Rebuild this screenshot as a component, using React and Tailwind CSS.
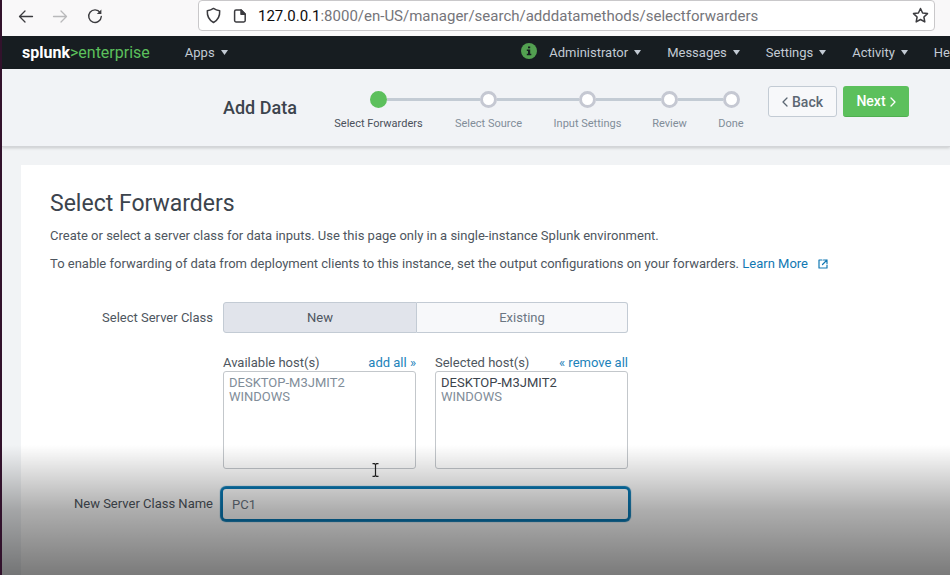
const STEPS = [
  { label: "Select Forwarders", width: "w-[121px]" },
  { label: "Select Source", width: "w-[99px]" },
  { label: "Input Settings", width: "w-[99px]" },
  { label: "Review", width: "w-[65px]" },
  { label: "Done", width: "w-[58px]" },
];

const HOSTS = ["DESKTOP-M3JMIT2", "WINDOWS"];

function Icon({ size, children, className = "", stroke = 1.5 }) {
  return (
    <svg
      width={size}
      height={size}
      viewBox={`0 0 ${size} ${size}`}
      fill="none"
      stroke="currentColor"
      strokeWidth={stroke}
      strokeLinecap="round"
      strokeLinejoin="round"
      className={`shrink-0 ${className}`}
      aria-hidden="true"
    >
      {children}
    </svg>
  );
}

function BrowserBar() {
  return (
    <div className="flex h-9 items-center bg-[#f9f8f9] pr-[15px] pl-4 text-[#3b3b3f]">
      <div className="mr-[94px] flex items-center gap-[18px]">
        <button type="button" aria-label="Back">
          <Icon size={16} stroke={1.3} className="mb-1">
            <path d="M14.500 8.500H1.500M7 3L1.500 8.500L7 14" />
          </Icon>
        </button>
        <button type="button" aria-label="Forward" className="text-[#b9b9bb]">
          <Icon size={16} stroke={1.3} className="mb-1">
            <path d="M1.500 8.500h13M9 3l5.500 5.500L9 14" />
          </Icon>
        </button>
        <button type="button" aria-label="Reload">
          <Icon size={18} stroke={1.4} className="mb-1">
            <path d="M14.200 5.600A6.300 6.300 0 1 0 15.300 9.500" />
            <path d="M15.400 2.400v4.600h-4.600z" fill="currentColor" stroke="none" />
          </Icon>
        </button>
      </div>
      <div className="mb-[5px] flex h-[31px] min-w-0 flex-1 items-center rounded-[4px] border border-[#c9c8ca] bg-white pr-[5px] pl-[6px]">
        <Icon size={17}>
          <path d="M8.500 1.400C10.500 2.800 12.600 3.400 14.700 3.700C15 9 13.300 12.900 8.500 15.500C3.700 12.900 2 9 2.300 3.700C4.400 3.400 6.500 2.800 8.500 1.400z" />
        </Icon>
        <Icon size={16} className="ml-[10px]">
          <path d="M4 2h5.200L13.200 6v6.600a1.400 1.400 0 0 1-1.400 1.400H4a1.400 1.400 0 0 1-1.400-1.400V3.400A1.400 1.400 0 0 1 4 2z" />
          <path d="M9 2l4.200 4.200H9z" fill="currentColor" />
        </Icon>
        <p className="ml-[10px] min-w-0 flex-1 truncate pt-[2px] text-[15px] text-[#75757a]">
          <span className="text-[#0c0c0d]">127.0.0.1</span>:8000/en-US/manager/search/adddatamethods/selectforwarders
        </p>
        <button type="button" aria-label="Bookmark this page">
          <Icon size={17}>
            <path d="M8.500 1.500l2.100 4.500 4.900.6-3.600 3.400.9 4.900-4.300-2.400-4.300 2.400.9-4.900L1.500 6.600l4.900-.6z" />
          </Icon>
        </button>
      </div>
    </div>
  );
}

function MenuButton({ children }) {
  return (
    <button type="button" className="flex shrink-0 items-center gap-[6px]">
      {children}
      <svg width="7" height="5" viewBox="0 0 7 5" fill="currentColor" aria-hidden="true">
        <path d="M0 0h7L3.500 5z" />
      </svg>
    </button>
  );
}

function NavBar() {
  return (
    <nav className="flex h-[33px] items-center justify-between overflow-hidden bg-[#171d21] pl-5 text-[13px] text-[#c3cbd4]">
      <div className="flex shrink-0 items-center gap-[35px]">
        <a href="#home" className="text-[16px]">
          <span className="font-bold text-white">splunk</span>
          <span className="text-[#5cc05c]">&gt;enterprise</span>
        </a>
        <MenuButton>Apps</MenuButton>
      </div>
      <div className="flex shrink-0 items-center gap-[26px]">
        <div className="flex items-center gap-3">
          <svg width="16" height="16" viewBox="0 0 16 16" className="mb-1" aria-label="Health">
            <circle cx="8" cy="8" r="8" fill="#53a051" />
            <path
              d="M7 3.500h2.200v1.800H7zM5.800 6.500h3.400v4.200h1.100v1.500H5.800v-1.500H7V8H5.800z"
              fill="#171d21"
            />
          </svg>
          <MenuButton>Administrator</MenuButton>
        </div>
        <MenuButton>Messages</MenuButton>
        <MenuButton>Settings</MenuButton>
        <MenuButton>Activity</MenuButton>
        <button type="button">He</button>
      </div>
    </nav>
  );
}

function Stepper() {
  return (
    <ol className="flex shrink-0">
      {STEPS.map((step, i) => (
        <li key={step.label} className={`flex flex-col items-center gap-2 ${step.width}`}>
          <div className="flex w-full items-center">
            <span className={`h-[3px] flex-1 ${i === 0 ? "" : "bg-[#c3cbd4]"}`} />
            <span
              className={`size-[17px] rounded-full border-3 ${
                i === 0 ? "border-[#5cc05c] bg-[#5cc05c]" : "border-[#c5c8d2] bg-white"
              }`}
            />
            <span className={`h-[3px] flex-1 ${i === STEPS.length - 1 ? "" : "bg-[#c3cbd4]"}`} />
          </div>
          <span className={`text-[11px] leading-4 whitespace-nowrap ${i === 0 ? "text-[#4a505a]" : "text-[#818d99]"}`}>
            {step.label}
          </span>
        </li>
      ))}
    </ol>
  );
}

function WizardHeader() {
  return (
    <header className="flex h-[78px] items-start overflow-hidden border-b border-[#d3d5d8] bg-[#f1f3f6] pl-[221px] shadow-[0_1px_3px_rgba(0,0,0,0.18)]">
      <h1 className="mt-[27px] w-[95px] shrink-0 text-[18px] leading-6 font-medium text-[#3c444d]">Add Data</h1>
      <div className="mt-[22px]">
        <Stepper />
      </div>
      <div className="mt-[17px] ml-2 flex shrink-0 gap-[6px] text-[14px] font-medium">
        <button
          type="button"
          className="flex h-[31px] w-[69px] items-center justify-center gap-1 rounded-[3px] border border-[#c3cbd4] bg-[#f7f8fa] pt-px text-[#5c6773]"
        >
          <Icon size={6} stroke={1.3} className="overflow-visible">
            <path d="M5-1L1 3l4 4" />
          </Icon>
          Back
        </button>
        <button
          type="button"
          className="flex h-[31px] w-[66px] items-center justify-center gap-1 rounded-[3px] border-b border-[#4fae50] bg-[#5cc05c] pt-px text-white"
        >
          Next
          <Icon size={6} stroke={1.3} className="overflow-visible">
            <path d="M1-1l4 4-4 4" />
          </Icon>
        </button>
      </div>
    </header>
  );
}

function HostList({ id, title, action, activeFirst }) {
  return (
    <div className="w-[193px]">
      <div className="flex justify-between leading-4">
        <span id={id}>{title}</span>
        <a href="#hosts" className="text-[#2182ba]">
          {action}
        </a>
      </div>
      <ul
        aria-labelledby={id}
        className="h-[98px] rounded-[3px] border border-[#c3c7cb] bg-white px-[5px] pt-1 leading-[14px] text-[#818d99]"
      >
        {HOSTS.map((host, i) => (
          <li key={host} className={activeFirst && i === 0 ? "text-[#3c444d]" : ""}>
            {host}
          </li>
        ))}
      </ul>
    </div>
  );
}

function ForwarderForm() {
  return (
    <form className="mt-7" onSubmit={(e) => e.preventDefault()}>
      <div className="flex items-center gap-[10px]">
        <span id="server-class" className="w-[163px] shrink-0 text-right">
          Select Server Class
        </span>
        <div role="group" aria-labelledby="server-class" className="flex h-[31px] w-[405px]">
          <button
            type="button"
            aria-pressed="true"
            className="w-[194px] rounded-l-[3px] border border-[#c3cbd4] bg-[#e1e4eb]"
          >
            New
          </button>
          <button
            type="button"
            aria-pressed="false"
            className="flex-1 rounded-r-[3px] border border-l-0 border-[#c3cbd4] bg-[#f7f8fa] text-[#6b7682]"
          >
            Existing
          </button>
        </div>
      </div>
      <div className="mt-[22px] ml-[173px] flex gap-[19px]">
        <HostList id="available" title="Available host(s)" action="add all »" />
        <HostList id="selected" title="Selected host(s)" action="« remove all" activeFirst />
      </div>
      <div className="mt-5 flex items-center gap-[10px]">
        <label htmlFor="class-name" className="w-[163px] shrink-0 text-right">
          New Server Class Name
        </label>
        <input
          id="class-name"
          type="text"
          defaultValue="PC1"
          className="h-[30px] w-[405px] rounded-[3px] bg-white px-[9px] text-[#6b7682] shadow-[0_0_1px_3px_#087ab6] outline-none"
        />
      </div>
    </form>
  );
}

export default function App() {
  return (
    <div className="relative flex min-h-screen flex-col overflow-hidden border-l-2 border-[#32122c] bg-[#f1f3f5] font-['Roboto',sans-serif] text-[13px] text-[#4e5660]">
      <BrowserBar />
      <NavBar />
      <WizardHeader />
      <main className="mt-[18px] ml-[19px] flex-1 bg-white px-[29px] pt-[25px]">
        <h2 className="text-[23px] leading-7 text-[#3c444d]">Select Forwarders</h2>
        <p className="mt-2 leading-5">
          Create or select a server class for data inputs. Use this page only in a single-instance Splunk environment.
        </p>
        <p className="mt-2 leading-5">
          To enable forwarding of data from deployment clients to this instance, set the output configurations on your
          forwarders.{" "}
          <a href="#learn-more" className="text-[#1178b3]">
            Learn More
            <Icon size={10} stroke={1.2} className="ml-[10px] inline-block align-[-1px]">
              <path d="M4 1H1v8h8V6M5.500 1H9v3.500M9 1L4.500 5.500" />
            </Icon>
          </a>
        </p>
        <ForwarderForm />
      </main>
      <svg width="7" height="14" viewBox="0 0 7 14" className="absolute top-[463px] left-[370px]" aria-hidden="true">
        <path d="M.5.700h2l1 .8 1-.8h2M3.500 1.500v11M.5 13.300h2l1-.8 1 .8h2" fill="none" stroke="#222" strokeWidth="1.200" />
      </svg>
      <div className="pointer-events-none absolute inset-x-0 bottom-0 h-[130px] bg-linear-to-b from-black/0 via-black/32 to-black/52" />
    </div>
  );
}
